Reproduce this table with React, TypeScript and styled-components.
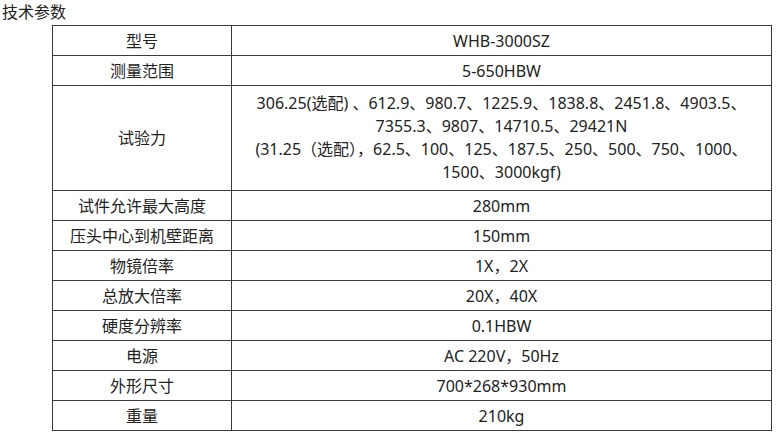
import React from "react";
import styled, { createGlobalStyle } from "styled-components";

const GlobalStyle = createGlobalStyle`
  html, body {
    margin: 0;
    padding: 0;
    background: #fff;
  }
  body {
    font-family: "Noto Sans", "Noto Sans CJK SC", sans-serif;
    color: #222;
  }
`;

const rows: { label: string; value: string }[] = [
  { label: "型号", value: "WHB-3000SZ" },
  { label: "测量范围", value: "5-650HBW" },
  { label: "试验力", value: "" },
  { label: "试件允许最大高度", value: "280mm" },
  { label: "压头中心到机壁距离", value: "150mm" },
  { label: "物镜倍率", value: "1X，2X" },
  { label: "总放大倍率", value: "20X，40X" },
  { label: "硬度分辨率", value: "0.1HBW" },
  { label: "电源", value: "AC 220V，50Hz" },
  { label: "外形尺寸", value: "700*268*930mm" },
  { label: "重量", value: "210kg" },
];

const forceLines = [
  "306.25(选配) 、612.9、980.7、1225.9、1838.8、2451.8、4903.5、",
  "7355.3、9807、14710.5、29421N",
  "(31.25（选配），62.5、100、125、187.5、250、500、750、1000、",
  "1500、3000kgf)",
];

function App() {
  return (
    <Page>
      <GlobalStyle />
      <Title>技术参数</Title>
      <Table>
        <colgroup>
          <col style={{ width: 179 }} />
          <col />
        </colgroup>
        <tbody>
          {rows.map((r) => (
            <tr key={r.label}>
              <Cell $tall={r.label === "试验力"}>{r.label}</Cell>
              <Cell $tall={r.label === "试验力"}>
                {r.label === "试验力"
                  ? forceLines.map((l) => <Line key={l}>{l}</Line>)
                  : r.value}
              </Cell>
            </tr>
          ))}
        </tbody>
      </Table>
    </Page>
  );
}

export default App;

const Page = styled.div`
  width: 781px;
  height: 433px;
  overflow: hidden;
`;

const Title = styled.div`
  font-size: 16px;
  line-height: 24px;
  padding-left: 2px;
  height: 25px;
`;

const Table = styled.table`
  margin-left: 52px;
  width: 720px;
  border-collapse: collapse;
  table-layout: fixed;
  font-size: 16px;
`;

const Cell = styled.td<{ $tall?: boolean }>`
  border: 1px solid #3a3a3a;
  text-align: center;
  vertical-align: middle;
  padding: 0;
  height: ${(p) => (p.$tall ? "104px" : "29px")};
  line-height: 22px;
`;

const Line = styled.div`
  line-height: 23px;
  white-space: nowrap;
`;
